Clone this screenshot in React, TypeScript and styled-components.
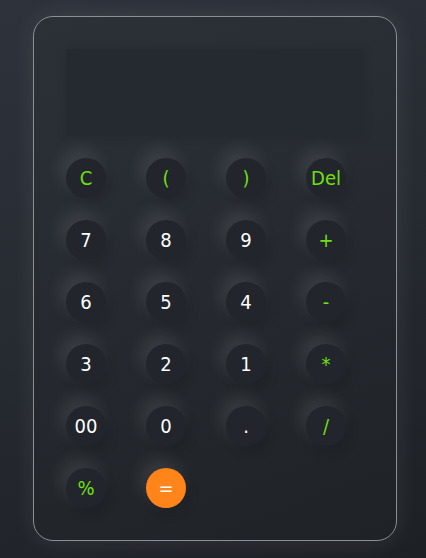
import React from "react";
import styled, { createGlobalStyle } from "styled-components";

const Global = createGlobalStyle`
  html, body {
    margin: 0;
    padding: 0;
  }
  body {
    width: 426px;
    height: 558px;
    overflow: hidden;
    background: linear-gradient(160deg, #2e333b 0%, #262a31 50%, #1d2025 100%);
    font-family: "DejaVu Sans Condensed", "DejaVu Sans", Verdana, sans-serif;
  }
`;

const Page = styled.div`
  display: flex;
  align-items: flex-start;
  padding: 16px 0 0 33px;
  height: 558px;
  box-sizing: border-box;
`;

const Card = styled.div`
  width: 364px;
  height: 525px;
  box-sizing: border-box;
  padding: 32px;
  border: 1px solid #8b8e93;
  border-radius: 20px;
  background: linear-gradient(160deg, #2c3138 0%, #262a30 50%, #1f2227 100%);
  box-shadow: 0 0 24px rgba(255, 255, 255, 0.09);
  display: flex;
  flex-direction: column;
  gap: 22px;
`;

const Display = styled.div`
  height: 87px;
  width: 298px;
  background: #252930;
  box-shadow: 0 0 10px rgba(0, 0, 0, 0.1);
`;

const Keys = styled.div`
  display: grid;
  grid-template-columns: repeat(4, 40px);
  grid-auto-rows: 40px;
  column-gap: 40px;
  row-gap: 22px;
`;

const Key = styled.button<{ $tone: "num" | "op" | "eq" }>`
  width: 40px;
  height: 40px;
  border: none;
  border-radius: 50%;
  padding: 0 0 1px 0;
  display: flex;
  align-items: center;
  justify-content: center;
  font-family: "DejaVu Sans Condensed", "DejaVu Sans", Verdana, sans-serif;
  font-stretch: condensed;
  font-size: 20px;
  line-height: 1;
  color: ${(p) => (p.$tone === "op" ? "#6ee011" : "#ffffff")};
  background: ${(p) => (p.$tone === "eq" ? "#ff841a" : "#22252b")};
  box-shadow: -6px -9px 18px rgba(255, 255, 255, 0.1),
    4px 6px 12px rgba(0, 0, 0, 0.12);
  cursor: pointer;
`;

const keys: { label: string; tone: "num" | "op" | "eq" }[] = [
  { label: "C", tone: "op" },
  { label: "(", tone: "op" },
  { label: ")", tone: "op" },
  { label: "Del", tone: "op" },
  { label: "7", tone: "num" },
  { label: "8", tone: "num" },
  { label: "9", tone: "num" },
  { label: "+", tone: "op" },
  { label: "6", tone: "num" },
  { label: "5", tone: "num" },
  { label: "4", tone: "num" },
  { label: "-", tone: "op" },
  { label: "3", tone: "num" },
  { label: "2", tone: "num" },
  { label: "1", tone: "num" },
  { label: "*", tone: "op" },
  { label: "00", tone: "num" },
  { label: "0", tone: "num" },
  { label: ".", tone: "num" },
  { label: "/", tone: "op" },
  { label: "%", tone: "op" },
  { label: "=", tone: "eq" },
];

export default function App() {
  return (
    <>
      <Global />
      <Page>
        <Card>
          <Display />
          <Keys>
            {keys.map((k) => (
              <Key key={k.label} $tone={k.tone}>
                {k.label}
              </Key>
            ))}
          </Keys>
        </Card>
      </Page>
    </>
  );
}
